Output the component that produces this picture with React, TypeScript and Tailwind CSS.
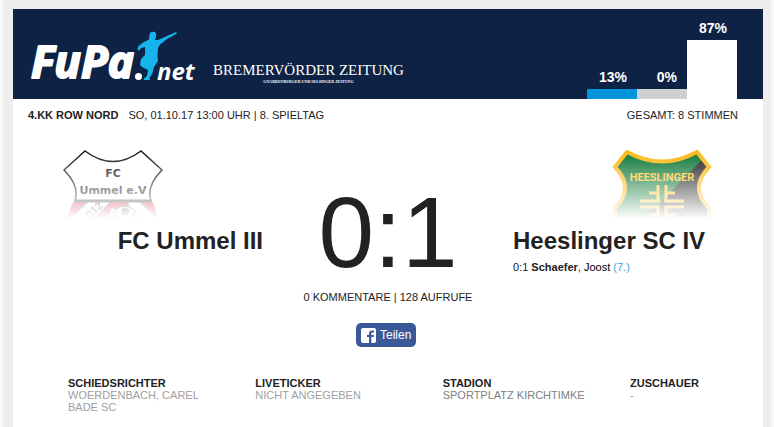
const votes = [
  { label: "13%", bar: "h-[10px] bg-[#0095db]" },
  { label: "0%", bar: "h-[10px] bg-[#cfd0d0]" },
  { label: "87%", bar: "h-[59px] bg-white" },
];

const details = [
  { title: "Schiedsrichter", value: "Woerdenbach, Carel Bade SC", color: "text-[#a0a0a0]" },
  { title: "Liveticker", value: "nicht angegeben", color: "text-[#a0a0a0]" },
  { title: "Stadion", value: "Sportplatz Kirchtimke", color: "text-[#808080]" },
  { title: "Zuschauer", value: "-", color: "text-[#a0a0a0]" },
];

export default function App() {
  return (
    <div className="min-h-screen border-x-3 border-[#f7f7f7] bg-[#ededed] pt-[9px] pr-2 pl-[10px] font-['Liberation_Sans',Arial,sans-serif] text-[11px] leading-3 text-[#222]">
      <main className="min-h-[calc(100vh-9px)] bg-white">
        <Header />
        <div className="flex justify-between px-[15px] pt-[10px] uppercase">
          <p>
            <b className="mr-[10px]">4.KK ROW Nord</b>
            So, 01.10.17 13:00 Uhr | 8. Spieltag
          </p>
          <p className="mr-[10px]">Gesamt: 8 Stimmen</p>
        </div>
        <section className="grid grid-cols-3 pt-[29px]">
          <div className="flex flex-col">
            <HomeCrest />
            <h2 className="mt-2 text-right text-2xl leading-7 font-bold">FC Ummel III</h2>
          </div>
          <div className="flex flex-col items-center pt-8">
            <p className="text-[100px] leading-[100px]">0:1</p>
            <p className="mt-[9px] uppercase">0 Kommentare | 128 Aufrufe</p>
            <button
              type="button"
              className="mt-5 mr-1 flex h-6 w-[60px] items-center gap-1 rounded-[5px] bg-[#3b5998] pl-[5px] text-xs text-white"
            >
              <FacebookIcon />
              Teilen
            </button>
          </div>
          <div className="flex flex-col">
            <AwayCrest />
            <h2 className="mt-2 text-2xl leading-7 font-bold whitespace-nowrap">Heeslinger SC IV</h2>
            <p className="mt-[6px]">
              0:1 <b>Schaefer</b>, <span className="text-black">Joost</span>{" "}
              <a href="#ticker" className="text-[#3b9fd6]">
                (7.)
              </a>
            </p>
          </div>
        </section>
        <dl className="grid grid-cols-[1fr_1fr_1fr_133px] pt-[30px] pl-[55px] uppercase">
          {details.map((item) => (
            <div key={item.title} className="pr-10">
              <dt className="font-bold">{item.title}</dt>
              <dd className={item.color}>{item.value}</dd>
            </div>
          ))}
        </dl>
      </main>
    </div>
  );
}

function Header() {
  return (
    <header className="flex h-[90px] justify-between bg-[#0d2244] pr-[26px] pl-4 text-white">
      <div className="flex items-start">
        <FupaLogo />
        <div className="mt-[52px] ml-[14px] text-center font-['Liberation_Serif',serif]">
          <p className="text-[15px] leading-[18px] whitespace-nowrap">BREMERVÖRDER ZEITUNG</p>
          <p className="text-[4px] leading-[5px] font-bold">GNARRENBURGER UND SELSINGER ZEITUNG</p>
        </div>
      </div>
      <div className="flex items-end text-sm font-bold">
        {votes.map((vote) => (
          <div key={vote.label} className="w-[50px] text-right">
            <p className="mr-[10px] mb-[2px]">{vote.label}</p>
            <div className={vote.bar} />
          </div>
        ))}
      </div>
    </header>
  );
}

function FupaLogo() {
  return (
    <svg className="h-[90px] w-[170px]" viewBox="0 0 170 90" fill="white">
      <g fontFamily="'Open Sans', 'Noto Sans', sans-serif" fontWeight="700" fontStyle="italic">
        <text x="2" y="69" fontSize="44" stroke="white" strokeWidth="2" strokeLinejoin="round">
          FuPa
        </text>
        <text x="128" y="71" fontSize="24">
          net
        </text>
      </g>
      <circle cx="109.500" cy="67.500" r="3.500" />
      <path
        fill="#15b4ed"
        d="M121 24Q123 22 126 23Q128 25 127 28L126 31L129 31L138 27L147 23L148 24.500L138 30L131 35.500L129 39L128.500 46L129 52L125 58L123.500 64L120.500 69L121 71H114.500L115 69.500L118 67L119 61L113 58L111 56L112 50L116 46L116 38L112 39L110 42L108.500 40L109.500 37L115 33L120 30.500Q120 27 121 24Z"
      />
    </svg>
  );
}

function FacebookIcon() {
  return (
    <svg className="size-[15px]" viewBox="0 0 15 15">
      <rect width="15" height="15" rx="2" fill="white" />
      <path
        fill="#3b5998"
        d="M8 15V9H6V7h2V5.500C8 3.500 9 2.500 11 2.500h2v2h-1.500c-1 0-1.200.500-1.200 1.200V7H13l-.4 2h-2.300v6z"
      />
    </svg>
  );
}

function HomeCrest() {
  return (
    <svg className="ml-[50px] h-[69px] w-[100px]" viewBox="0 0 100 69">
      <defs>
        <linearGradient id="home-fade" x2="0" y2="1">
          <stop offset="0" stopColor="white" stopOpacity="0" />
          <stop offset="1" stopColor="white" />
        </linearGradient>
        <clipPath id="home-shape">
          <path d="M12 50H88Q92 54 95 69H4Q8 54 12 50Z" />
        </clipPath>
      </defs>
      <g clipPath="url(#home-shape)">
        <path fill="#c8102e" d="M0 50h100v19H0z" />
        <path fill="white" d="M26 50H49L28 71H5zM49 58L43 71H78L64 54L78 54L92 70L82 71z" />
        <path fill="white" d="M62 50H76L96 70H82z" />
        <path fill="none" stroke="#333" d="M26 51L6 70M50 51L31 70M62 51L67 56M76 51L95 70" />
        <circle cx="62" cy="68" r="12" fill="white" stroke="#333" />
        <path fill="#333" d="M58 60l4-3 5 3-2 5h-6zM50 67l4-3v5zM70 63l3 4-3 2z" />
      </g>
      <text
        transform="translate(27 69) rotate(-43)"
        fontFamily="Liberation Sans"
        fontSize="11"
        fontWeight="700"
        fill="#222"
      >
        012
      </text>
      <path
        d="M22 1Q50 22 78 1L99 20Q83 36 88 51H12Q17 36 1 20Z"
        fill="white"
        stroke="#111"
        strokeWidth="1.500"
      />
      <path d="M11 51H89" stroke="#222" strokeWidth="3" />
      <g fontFamily="DejaVu Sans" fontWeight="700" textAnchor="middle" fill="#111">
        <text x="50" y="27" fontSize="11">FC</text>
        <text x="50" y="44" fontSize="11">Ummel e.V</text>
      </g>
      <path fill="url(#home-fade)" d="M0 0h100v69H0z" />
    </svg>
  );
}

function AwayCrest() {
  return (
    <svg className="mr-[51px] h-[69px] w-[100px] self-end" viewBox="0 0 100 69">
      <defs>
        <linearGradient id="away-fade" x2="0" y2="1">
          <stop offset="0" stopColor="white" stopOpacity="0" />
          <stop offset="1" stopColor="white" />
        </linearGradient>
        <clipPath id="away-shape">
          <path d="M15 2Q50 21 85 2L97 17Q77 38 97 58V80H3V58Q23 38 3 17Z" />
        </clipPath>
      </defs>
      <g clipPath="url(#away-shape)">
        <path fill="#087432" d="M0 0h100v80H0z" />
        <path fill="#1c1c1c" d="M100 0L25 76H100z" />
      </g>
      <path
        d="M15 2Q50 21 85 2L97 17Q77 38 97 58V80H3V58Q23 38 3 17Z"
        fill="none"
        stroke="#fdb813"
        strokeWidth="4"
      />
      <text
        x="50"
        y="31"
        fontFamily="Roboto, sans-serif"
        fontSize="11"
        fontWeight="700"
        textAnchor="middle"
        fill="#ffc320"
      >
        HEESLINGER
      </text>
      <path
        d="M46 35V51M37 43H46M28 51H48M54 35V51M52 51H72M54 43H63M28 57H46V69M54 69V57H72M37 65H46M54 65H63"
        fill="none"
        stroke="#ffc320"
        strokeWidth="3"
      />
      <path fill="url(#away-fade)" d="M0 0h100v69H0z" />
    </svg>
  );
}
